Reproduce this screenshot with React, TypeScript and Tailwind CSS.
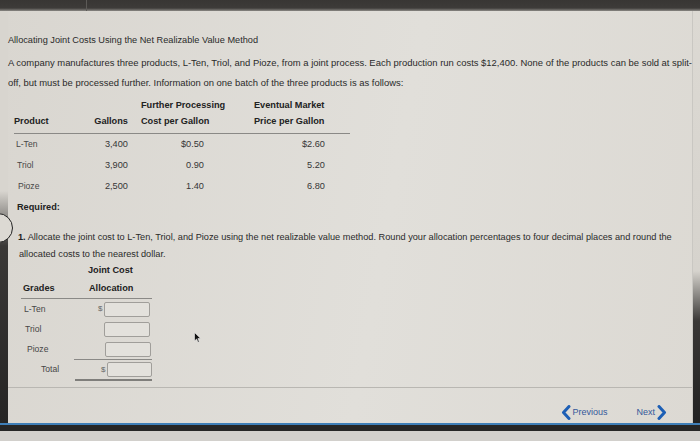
import React from "react";

const products = [
  { name: "L-Ten", gallons: "3,400", cost: "$0.50", price: "$2.60" },
  { name: "Triol", gallons: "3,900", cost: "0.90", price: "5.20" },
  { name: "Pioze", gallons: "2,500", cost: "1.40", price: "6.80" },
];

function Field({ dollar, shift = 0 }: { dollar?: boolean; shift?: number }) {
  return (
    <div className={`flex items-center ${shift === 0 ? "pl-[9px]" : shift === 1 ? "pl-[10px]" : "pl-[12px]"}`}>
      <span className="w-[6px] text-[8px] text-[#666]">{dollar ? "$" : ""}</span>
      <div className="w-[46px] h-[15px] rounded-[2px] border border-[#a09e9a] bg-[#e3e1dc]" />
    </div>
  );
}

function Chevron({ dir }: { dir: "left" | "right" }) {
  return (
    <svg width="10" height="15" viewBox="0 0 10 15" fill="none">
      <path
        d={dir === "left" ? "M8 1.5 L2.5 7.5 L8 13.5" : "M2 1.5 L7.5 7.5 L2 13.5"}
        stroke="#1d5fb5"
        strokeWidth="3"
        strokeLinecap="round"
        strokeLinejoin="round"
      />
    </svg>
  );
}

export default function App() {
  return (
    <div className="relative w-[700px] h-[441px] overflow-hidden flex flex-col bg-[#dcd9d3] font-['Liberation_Sans',Arial,sans-serif] text-[9.2px] text-[#2a2a2a]">
      {/* top bezel */}
      <div className="h-[11px] flex bg-[linear-gradient(to_bottom,#383634_0,#3d3b39_8px,#8a8884_11px)]">
        <div className="w-[87px] border-r border-[#5c5a57]" />
      </div>

      <div className="flex-1 flex bg-[linear-gradient(100deg,#d9d6d0_0%,#e1dfda_55%,#dcd9d3_100%)]">
        <div className="w-[8px] bg-[linear-gradient(to_bottom,#d8d5cf_0,#d8d5cf_180px,#3a3836_235px,#262524_100%)]" />

        <div className="flex-1 flex flex-col">
          <main className="flex-1 flex flex-col pt-[19px]">
            <h1 className="leading-[20px]">Allocating Joint Costs Using the Net Realizable Value Method</h1>

            <p className="mt-[3px] leading-[20px] text-[9.45px]">
              <span className="block whitespace-nowrap">
                A company manufactures three products, L-Ten, Triol, and Pioze, from a joint process. Each production run costs $12,400. None of the products can be sold at split-
              </span>
              <span className="block whitespace-nowrap">
                off, but must be processed further. Information on one batch of the three products is as follows:
              </span>
            </p>

            <div className="mt-[5px] ml-[6px] w-[336px]">
              <div className="border-b border-[#8a8986] pb-[3px] font-bold text-[#222]">
                <div className="grid grid-cols-[75px_39px_126px_96px] h-[16px] items-center">
                  <span />
                  <span />
                  <span className="pl-[13px]">Further Processing</span>
                  <span>Eventual Market</span>
                </div>
                <div className="grid grid-cols-[75px_39px_126px_96px] h-[16px] items-center">
                  <span>Product</span>
                  <span className="text-right">Gallons</span>
                  <span className="pl-[13px]">Cost per Gallon</span>
                  <span>Price per Gallon</span>
                </div>
              </div>
              {products.map((p, i) => (
                <div key={p.name} className="grid grid-cols-[75px_39px_126px_96px] h-[21px] items-center text-[#363636]">
                  <span className={`text-[8.6px] text-[#474747] ${i === 0 ? "pl-[2px]" : i === 1 ? "pl-[3px]" : "pl-[4px]"}`}>{p.name}</span>
                  <span className="text-right">{p.gallons}</span>
                  <span className="text-right pr-[50px]">{p.cost}</span>
                  <span className="text-right pr-[25px]">{p.price}</span>
                </div>
              ))}
            </div>

            <div className="ml-[9px] leading-[20px] font-bold text-[#222]">Required:</div>

            <p className="mt-[12px] ml-[10px] leading-[17px]">
              <span className="block whitespace-nowrap">
                <b className="text-[#222]">1.</b> Allocate the joint cost to L-Ten, Triol, and Pioze using the net realizable value method. Round your allocation percentages to four decimal places and round the
              </span>
              <span className="block whitespace-nowrap pl-[1px]">allocated costs to the nearest dollar.</span>
            </p>

            <div className="ml-[13px] w-[131px]">
              <div className="grid grid-cols-[68px_63px] h-[16px] items-center font-bold text-[#222]">
                <span />
                <span className="-ml-[1px]">Joint Cost</span>
              </div>
              <div className="grid grid-cols-[68px_63px] h-[20px] items-center border-b border-[#8a8986] font-bold text-[#222]">
                <span className="pl-[2px]">Grades</span>
                <span>Allocation</span>
              </div>
              {["L-Ten", "Triol", "Pioze"].map((g, i) => (
                <div key={g} className="grid grid-cols-[68px_63px] h-[20px] items-center">
                  <span className={`text-[8.6px] text-[#474747] ${i === 0 ? "pl-[3px]" : i === 1 ? "pl-[4px]" : "pl-[6px]"}`}>{g}</span>
                  <Field dollar={i === 0} shift={i === 2 ? 1 : 0} />
                </div>
              ))}
              <div className="ml-[53px] border-t border-[#8a8986]" />
              <div className="grid grid-cols-[68px_63px] h-[19px] items-center">
                <span className="pl-[20px] text-[8.6px] text-[#474747]">Total</span>
                <Field dollar shift={2} />
              </div>
              <div className="ml-[54px] h-[2px] bg-[#7f7e7b]" />
            </div>
          </main>

          <footer className="h-[36px] border-t border-[#b9b7b2] flex justify-end items-start pt-[17px] pr-[25px] text-[9px] text-[#34589a]">
            <button className="flex items-center gap-[2px]">
              <Chevron dir="left" />
              <span>Previous</span>
            </button>
            <button className="ml-[29px] flex items-center gap-[2px]">
              <span>Next</span>
              <Chevron dir="right" />
            </button>
          </footer>
        </div>

        <div className="w-[8px] border-l border-[#c9c7c2] bg-[linear-gradient(to_bottom,#dcd9d3_0,#d6d3cd_260px,#3a3836_310px,#222_100%)]" />
      </div>

      {/* bottom bezel */}
      <div className="h-[2px] bg-[#3f7fb8]" />
      <div className="h-[6px] bg-[#262626]" />
      <div className="h-[10px] bg-[#d2d0cc]" />

      {/* question marker circle at the edge */}
      <div className="absolute left-[-17px] top-[213px] w-[30px] h-[30px] rounded-full border-[1.5px] border-[#222] bg-[#dcd9d3]" />

      {/* mouse pointer */}
      <svg className="absolute left-[194px] top-[332px]" width="7" height="11" viewBox="0 0 7 11">
        <path d="M0.5 0.5 L0.5 9 L2.6 7 L4 10.3 L5.3 9.7 L3.9 6.5 L6.6 6.4 Z" fill="#111" stroke="#f4f4f4" strokeWidth="0.6" />
      </svg>
    </div>
  );
}
